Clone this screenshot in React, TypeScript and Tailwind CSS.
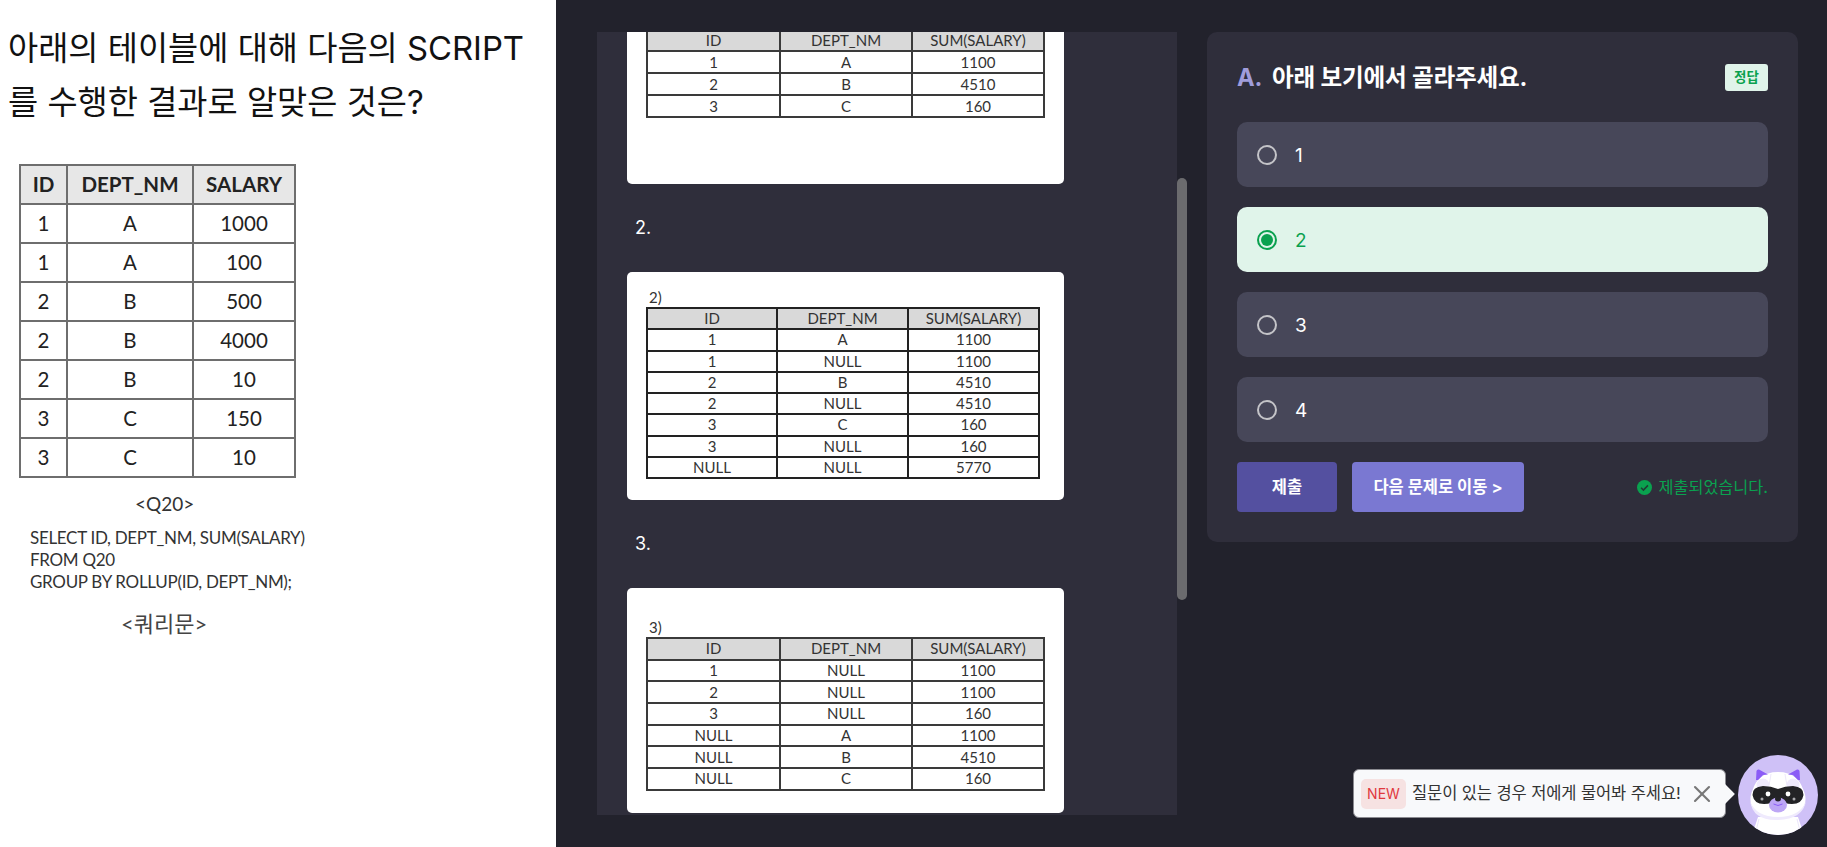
import React from 'react';
import { X } from 'lucide-react';

const sansKr = "font-[Inter,'Noto_Sans_CJK_KR',sans-serif]";

const questionRows = [
  ['1', 'A', '1000'],
  ['1', 'A', '100'],
  ['2', 'B', '500'],
  ['2', 'B', '4000'],
  ['2', 'B', '10'],
  ['3', 'C', '150'],
  ['3', 'C', '10'],
];

const answer1 = [['1', 'A', '1100'], ['2', 'B', '4510'], ['3', 'C', '160']];
const answer2 = [
  ['1', 'A', '1100'],
  ['1', 'NULL', '1100'],
  ['2', 'B', '4510'],
  ['2', 'NULL', '4510'],
  ['3', 'C', '160'],
  ['3', 'NULL', '160'],
  ['NULL', 'NULL', '5770'],
];
const answer3 = [
  ['1', 'NULL', '1100'],
  ['2', 'NULL', '1100'],
  ['3', 'NULL', '160'],
  ['NULL', 'A', '1100'],
  ['NULL', 'B', '4510'],
  ['NULL', 'C', '160'],
];

function ResultTable({ rows, cols, rowClass, border = 'border-[#3a3a3a]' }: { rows: string[][]; cols: string[]; rowClass: string; border?: string }) {
  return (
    <table className="table-fixed border-collapse font-[Lato,'Open_Sans',sans-serif] text-[15px] leading-none text-[#333]">
      <thead>
        <tr className={rowClass}>
          {['ID', 'DEPT_NM', 'SUM(SALARY)'].map((h, i) => (
            <th key={h} className={`border-2 ${border} bg-[#d9d9d9] p-0 text-center font-normal ${cols[i]}`}>{h}</th>
          ))}
        </tr>
      </thead>
      <tbody>
        {rows.map((r, i) => (
          <tr key={i} className={rowClass}>
            {r.map((c, j) => <td key={j} className={`border-2 ${border} bg-white p-0 text-center`}>{c}</td>)}
          </tr>
        ))}
      </tbody>
    </table>
  );
}

function QuestionImage() {
  return (
    <div className="pl-[19px] pt-[35px] font-[Lato,'Noto_Sans_CJK_KR',sans-serif] text-[#222]">
      <table className="table-fixed border-collapse text-[20.5px] leading-none">
        <thead>
          <tr className="h-[39px]">
            <th className="w-[47px] border-2 border-[#6e6e6e] bg-[#e7e7e7] p-0 font-bold">ID</th>
            <th className="w-[126px] border-2 border-[#6e6e6e] bg-[#e7e7e7] p-0 font-bold">DEPT_NM</th>
            <th className="w-[102px] border-2 border-[#6e6e6e] bg-[#e7e7e7] p-0 font-bold">SALARY</th>
          </tr>
        </thead>
        <tbody>
          {questionRows.map((r, i) => (
            <tr key={i} className="h-[39px]">
              {r.map((c, j) => <td key={j} className="border-2 border-[#6e6e6e] p-0 text-center">{c}</td>)}
            </tr>
          ))}
        </tbody>
      </table>
      <p className="ml-[116px] mt-[14px] text-[19px] leading-[24px] text-[#333]">&lt;Q20&gt;</p>
      <div className="ml-[11px] mt-[11px] text-[17px] leading-[22px] tracking-[-0.3px] text-[#333]">
        <p>SELECT ID, DEPT_NM, SUM(SALARY)</p>
        <p>FROM Q20</p>
        <p>GROUP BY ROLLUP(ID, DEPT_NM);</p>
      </div>
      <p className="ml-[102px] mt-[17px] text-[22px] leading-[28px] text-[#444]">&lt;쿼리문&gt;</p>
    </div>
  );
}

function AnswerList() {
  const cols = ['w-[133px]', 'w-[132px]', 'w-[132px]'];
  const cols2 = ['w-[130px]', 'w-[131px]', 'w-[131px]'];
  return (
    <div className={`h-[783px] w-[580px] overflow-hidden bg-[#2f2e3b] px-[30px] ${sansKr}`}>
      <div className="h-[152px] w-[437px] overflow-hidden rounded-b-[5px] bg-white pl-[19px]">
        <div className="-mt-[4px]">
          <ResultTable rows={answer1} cols={cols} rowClass="h-[22px]" />
        </div>
      </div>
      <p className="flex h-[88px] items-center pb-[2px] pl-[8px] text-[18px] text-white">2.</p>
      <div className="h-[228px] w-[437px] rounded-[5px] bg-white pl-[19px] pt-[16px]">
        <p className="h-[19px] pl-[3px] font-[Lato,sans-serif] text-[15px] leading-[19px] text-[#333]">2)</p>
        <ResultTable rows={answer2} cols={cols2} rowClass="h-[21.25px]" border="border-[#222]" />
      </div>
      <p className="flex h-[88px] items-center pb-[2px] pl-[8px] text-[18px] text-white">3.</p>
      <div className="h-[225px] w-[437px] rounded-[5px] bg-white pl-[19px] pt-[30px]">
        <p className="h-[19px] pl-[3px] font-[Lato,sans-serif] text-[15px] leading-[19px] text-[#333]">3)</p>
        <ResultTable rows={answer3} cols={cols} rowClass="h-[21.7px]" />
      </div>
    </div>
  );
}

function Choice({ label, selected }: { label: string; selected?: boolean }) {
  return (
    <div className={`flex h-[65px] items-center rounded-[10px] pl-[20px] ${selected ? 'bg-[#e0f4ea] text-[#0aa14f]' : 'bg-[#474759] text-white'}`}>
      {selected ? (
        <span className="flex h-[20px] w-[20px] items-center justify-center rounded-full border-2 border-[#0aa14f]">
          <span className="h-[12px] w-[12px] rounded-full bg-[#0aa14f]" />
        </span>
      ) : (
        <span className="h-[20px] w-[20px] rounded-full border-2 border-[#c4c4c8]" />
      )}
      <span className="ml-[18px] pt-[3px] text-[19px]">{label}</span>
    </div>
  );
}

function AnswerPanel() {
  return (
    <div className={`h-[510px] w-[591px] rounded-[10px] bg-[#2f2e3b] px-[30px] pt-[27px] ${sansKr}`}>
      <div className="flex h-[36px] items-center justify-between">
        <h2 className="flex items-center pt-[2px] text-[23.6px] font-bold tracking-[-0.2px] text-white">
          <span className="mr-[10px] text-[#a09ddb]">A.</span>아래 보기에서 골라주세요.
        </h2>
        <span className="flex h-[27px] w-[43px] items-center justify-center rounded-[3px] bg-[#e0f4ea] text-[13.5px] font-bold text-[#0aa14f]">정답</span>
      </div>
      <div className="mt-[27px] flex flex-col gap-[20px]">
        <Choice label="1" />
        <Choice label="2" selected />
        <Choice label="3" />
        <Choice label="4" />
      </div>
      <div className="mt-[20px] flex h-[50px] items-center">
        <button className="h-[50px] w-[100px] rounded-[4px] bg-[#5450a0] text-[16.5px] font-bold text-white">제출</button>
        <button className="ml-[15px] h-[50px] w-[172px] rounded-[4px] bg-[#7a78d2] text-[16.5px] font-bold text-white">다음 문제로 이동 &gt;</button>
        <span className="ml-auto flex items-center text-[16.3px] text-[#0aa14f]">
          <svg width="15" height="15" viewBox="0 0 14 14" className="mr-[6px]">
            <circle cx="7" cy="7" r="7" fill="#0aa14f" />
            <path d="M3.8 7.2 6 9.4l4.2-4.4" fill="none" stroke="#1f3a33" strokeWidth="1.4" />
          </svg>
          제출되었습니다.
        </span>
      </div>
    </div>
  );
}

function Mascot() {
  return (
    <svg width="80" height="80" viewBox="0 0 80 80" className="block">
      <defs>
        <clipPath id="face"><circle cx="40" cy="40" r="40" /></clipPath>
      </defs>
      <circle cx="40" cy="40" r="40" fill="#cfc1f7" />
      <g clipPath="url(#face)">
        <path d="M20 62 14 80H66L60 62z" fill="#fff" />
        <path d="M21 64 17 80M59 64 63 80" stroke="#e2daf8" strokeWidth="0.7" fill="none" />
        <path d="M40 17C25 17 18 25 15 34 10 44 12 55 24 60 34 64 46 64 56 60 68 55 70 44 65 34 62 25 55 17 40 17z" fill="#fff" />
        <path d="M12 46q6 16 28 16t28-16q-3 18-28 19T12 46z" fill="#efeafd" />
        <circle cx="25" cy="30" r="6.500" fill="#efeafd" />
        <circle cx="55" cy="30" r="6.500" fill="#efeafd" />
        <path d="M33 19q-1 7-2 11M47 19q1 7 2 11" stroke="#e6e0f8" strokeWidth="0.7" fill="none" />
        <path d="M18 25 18.500 16q.3-2 2.500-1.500L30 19.500 25 20 20 25z" fill="#8b5cf6" />
        <path d="M62 25 61.500 16q-.3-2-2.500-1.500L50 19.500 55 20 60 25z" fill="#8b5cf6" />
        <path d="M25 31Q33 31 40 34 47 31 55 31 66 32 65.500 40 64 49 54 49 46 49 40 44 34 49 26 49 16 49 14.500 40 14 32 25 31z" fill="#232326" />
        <circle cx="30" cy="39" r="2.400" fill="#fff" />
        <circle cx="50" cy="39" r="2.400" fill="#fff" />
        <circle cx="24" cy="44" r="1.500" fill="#a9a9ad" />
        <circle cx="56" cy="44" r="1.500" fill="#a9a9ad" />
        <ellipse cx="40" cy="50" rx="9" ry="7.500" fill="#bda6f5" />
        <ellipse cx="40" cy="44" rx="3" ry="2.400" fill="#232326" />
        <path d="M35.500 49q4.500 3 9 0" stroke="#8b5cf6" strokeWidth="1" fill="none" />
      </g>
    </svg>
  );
}

function ChatPrompt() {
  return (
    <div className={`fixed bottom-[12px] right-[9px] flex items-center ${sansKr}`}>
      <div className="relative mb-[3px] flex h-[49px] w-[373px] items-center rounded-[6px] border border-[#8a8a90] bg-[#f8f9fb] pl-[7px]">
        <span className="flex h-[30px] w-[45px] items-center justify-center rounded-[5px] bg-[#f6e2e2] text-[14px] text-[#e0393e]">NEW</span>
        <span className="ml-[6px] text-[16.5px] tracking-[-0.1px] text-[#333]">질문이 있는 경우 저에게 물어봐 주세요!</span>
        <X size={28} strokeWidth={1.8} className="ml-auto mr-[9px] text-[#777]" />
        <span className="absolute -right-[7px] top-[17px] h-[14px] w-[14px] rotate-45 bg-[#f8f9fb]" />
      </div>
      <div className="ml-[12px]"><Mascot /></div>
    </div>
  );
}

export default function App() {
  return (
    <div className="flex h-screen overflow-hidden bg-[#22222c]">
      <section className={`h-full w-[556px] shrink-0 bg-white pt-[21px] ${sansKr}`}>
        <h1 className="ml-[8px] w-[530px] text-[32.8px] font-normal leading-[54px] text-[#111]">
          아래의 테이블에 대해 다음의 SCRIPT 를 수행한 결과로 알맞은 것은?
        </h1>
        <QuestionImage />
      </section>
      <main className="flex flex-1 items-start pl-[41px] pt-[32px]">
        <AnswerList />
        <div className="mt-[146px] h-[422px] w-[10px] rounded-[5px] bg-[#6b6b6e]" />
        <div className="ml-[20px]"><AnswerPanel /></div>
      </main>
      <ChatPrompt />
    </div>
  );
}
